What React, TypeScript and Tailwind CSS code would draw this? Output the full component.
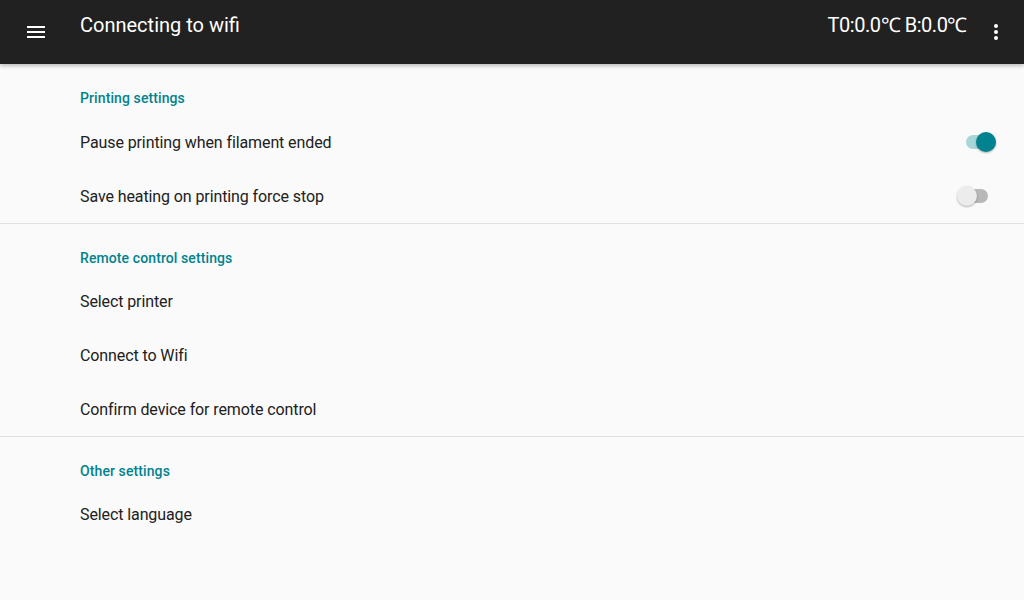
import React from 'react';

interface Row {
  label: string;
  toggle?: 'on' | 'off';
}

interface Section {
  title: string;
  rows: Row[];
}

const sections: Section[] = [
  {
    title: 'Printing settings',
    rows: [
      { label: 'Pause printing when filament ended', toggle: 'on' },
      { label: 'Save heating on printing force stop', toggle: 'off' },
    ],
  },
  {
    title: 'Remote control settings',
    rows: [
      { label: 'Select printer' },
      { label: 'Connect to Wifi' },
      { label: 'Confirm device for remote control' },
    ],
  },
  {
    title: 'Other settings',
    rows: [{ label: 'Select language' }],
  },
];

function Toggle({ on }: { on: boolean }) {
  if (on) {
    return (
      <div className="relative mr-[28px] h-5 w-[30px]">
        <div className="absolute left-0 top-[3px] h-[14px] w-[30px] rounded-full bg-[#a9d6d9]" />
        <div className="absolute right-0 top-0 h-5 w-5 rounded-full bg-[#00838f] shadow-[0_1px_2px_rgba(0,0,0,0.3)]" />
      </div>
    );
  }
  return (
    <div className="relative mr-[36px] h-5 w-[31px]">
      <div className="absolute left-[1px] top-[3px] h-[14px] w-[30px] rounded-full bg-[#b8b8b8]" />
      <div className="absolute left-0 top-0 h-5 w-5 rounded-full bg-[#ececec] shadow-[0_1px_2px_rgba(0,0,0,0.3)]" />
    </div>
  );
}

export default function App() {
  return (
    <div
      className="flex h-[600px] w-[1024px] flex-col overflow-hidden bg-[#fafafa]"
      style={{ fontFamily: 'Roboto, "Liberation Sans", sans-serif' }}
    >
      <header className="relative z-10 flex h-16 shrink-0 items-start bg-[#212121] text-white shadow-[0_2px_4px_rgba(0,0,0,0.25)]">
        <div className="flex h-16 w-[72px] items-center justify-center">
          <svg width="18" height="12" viewBox="0 0 18 12" fill="#ffffff">
            <rect x="0" y="0" width="18" height="2" />
            <rect x="0" y="5" width="18" height="2" />
            <rect x="0" y="10" width="18" height="2" />
          </svg>
        </div>
        <h1 className="ml-2 pt-[11px] text-[20px] leading-7 text-white">Connecting to wifi</h1>
        <div className="flex-1" />
        <span className="pt-[11px] text-[20px] leading-7 tracking-[-0.45px] text-white">T0:0.0℃ B:0.0℃</span>
        <div className="flex h-16 w-[57px] items-center justify-center">
          <svg width="4" height="16" viewBox="0 0 4 16" fill="#ffffff">
            <circle cx="2" cy="2" r="2" />
            <circle cx="2" cy="8" r="2" />
            <circle cx="2" cy="14" r="2" />
          </svg>
        </div>
      </header>

      <main className="flex flex-col">
        {sections.map((section, i) => (
          <div key={section.title} className={i < sections.length - 1 ? 'border-b border-[#e0e0e0]' : ''}>
            <div
              className={
                i === 0
                  ? 'pl-20 pt-[26px] pb-[9px] text-[14px] font-medium leading-4 tracking-[0.1px] text-[#00838f]'
                  : 'pl-20 pt-[26px] pb-[8px] text-[14px] font-medium leading-4 tracking-[0.1px] text-[#00838f]'
              }
            >
              {section.title}
            </div>
            {section.rows.map((row) => (
              <div key={row.label} className="flex h-[54px] items-center justify-between pl-20">
                <span className="mt-[2px] text-[16px] tracking-[-0.1px] text-[#212121]">{row.label}</span>
                {row.toggle && <Toggle on={row.toggle === 'on'} />}
              </div>
            ))}
          </div>
        ))}
      </main>
    </div>
  );
}
